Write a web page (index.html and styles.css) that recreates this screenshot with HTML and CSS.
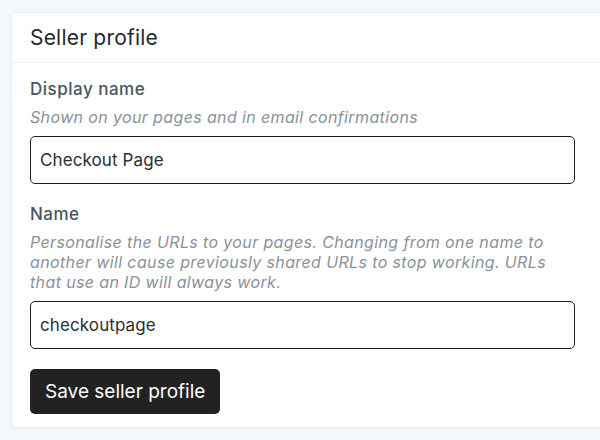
FILE: index.html
```html
<!DOCTYPE html>
<html>
<head>
<meta charset="utf-8">
<link rel="stylesheet" href="styles.css">
</head>
<body>
<div class="card">
  <div class="card-header">Seller profile</div>
  <div class="card-body">
    <div class="field">
      <div class="label">Display name</div>
      <div class="help">Shown on your pages and in email confirmations</div>
      <div class="input">Checkout Page</div>
    </div>
    <div class="field">
      <div class="label">Name</div>
      <div class="help">Personalise the URLs to your pages. Changing from one name to another will cause previously shared URLs to stop working. URLs that use an ID will always work.</div>
      <div class="input">checkoutpage</div>
    </div>
    <div class="actions">
      <button class="btn">Save seller profile</button>
    </div>
  </div>
</div>
</body>
</html>
```
FILE: styles.css
```css
html, body {
  margin: 0;
  padding: 0;
  background: #f5f8fb;
  overflow: hidden;
  width: 600px;
  height: 440px;
}
body {
  font-family: Inter, "Noto Sans", sans-serif;
  padding: 12px 0 0 11px;
  box-sizing: border-box;
}
.card {
  width: 640px;
  background: #ffffff;
  border: 1px solid #e9edf2;
  border-radius: 4px;
  box-shadow: 0 1px 2px rgba(0,0,0,0.04);
}
.card-header {
  height: 50px;
  box-sizing: border-box;
  padding: 12px 0 0 18px;
  font-size: 21px;
  line-height: 26px;
  letter-spacing: 0.2px;
  color: #25292e;
  border-bottom: 1px solid #eef0f3;
}
.card-body {
  padding: 16px 0 13px 18px;
  width: 545px;
  display: flex;
  flex-direction: column;
}
.field {
  display: flex;
  flex-direction: column;
  margin-bottom: 20px;
}
.label {
  font-size: 17px;
  line-height: 20px;
  font-weight: 500;
  letter-spacing: 0.5px;
  color: #4b545e;
}
.help {
  margin-top: 8px;
  font-size: 16px;
  line-height: 20px;
  letter-spacing: 0.37px;
  font-style: italic;
  color: #8b9199;
}
.input {
  margin-top: 9px;
  height: 48px;
  box-sizing: border-box;
  border: 1.5px solid #1f1f1f;
  border-radius: 5px;
  padding: 0 0 0 9px;
  display: flex;
  align-items: center;
  font-size: 17px;
  letter-spacing: 0.1px;
  color: #2b2e33;
}
.actions {
  display: flex;
}
.btn {
  font-family: Inter, "Noto Sans", sans-serif;
  background: #222222;
  color: #ffffff;
  border: none;
  border-radius: 5px;
  height: 45px;
  padding: 0 15px;
  font-size: 19px;
}
```
